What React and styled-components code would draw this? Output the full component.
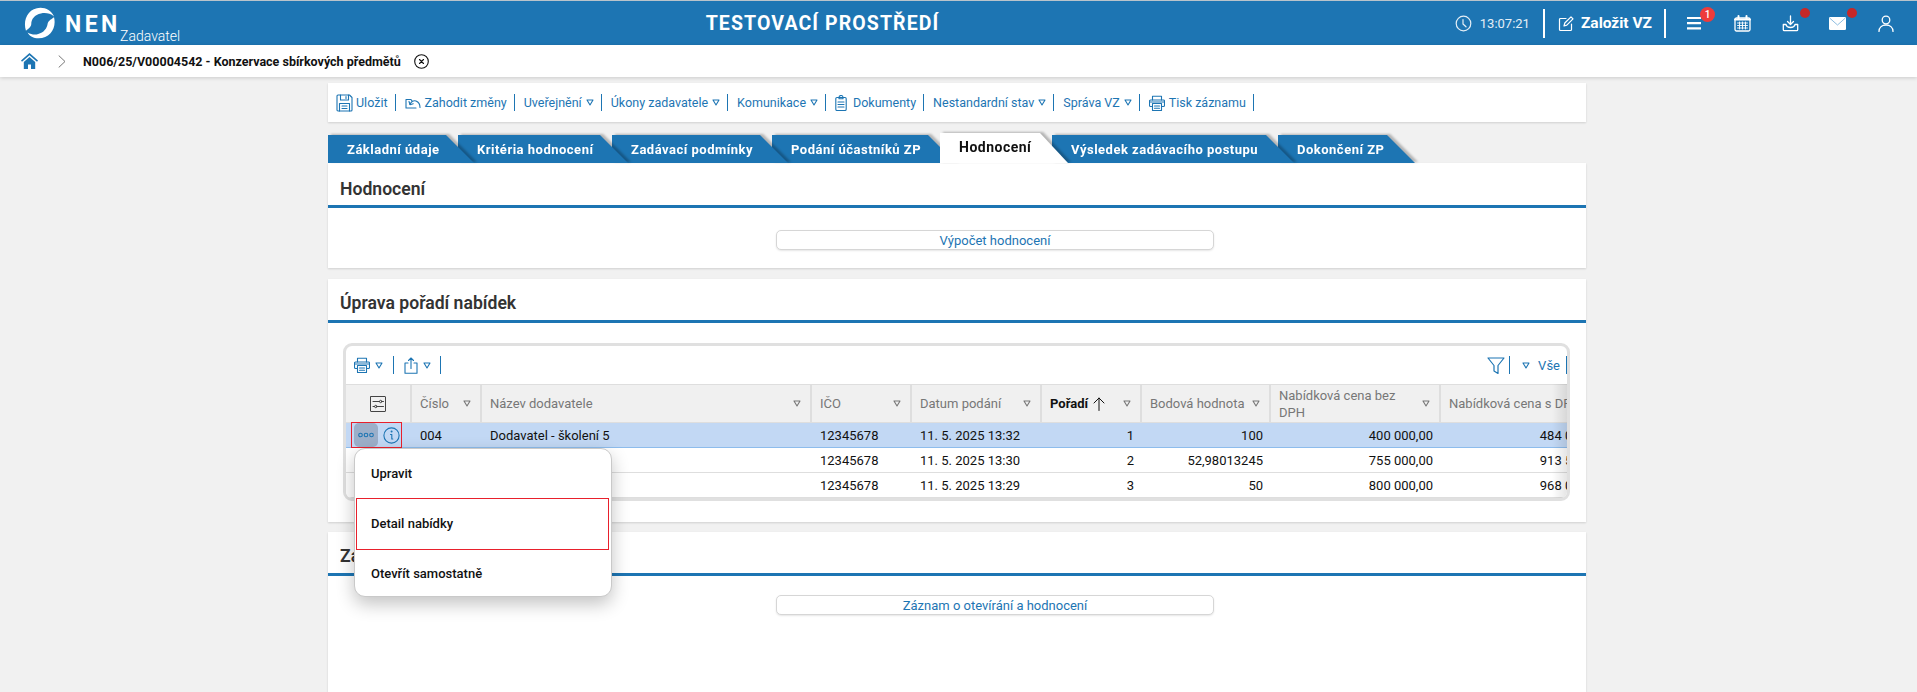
import React from "react";
import styled, { createGlobalStyle } from "styled-components";

const BLUE = "#1d75b3";

const Global = createGlobalStyle`
  html, body { margin: 0; padding: 0; height: 692px; overflow: hidden; background: #f1f1f1; }
  body { font-family: Roboto, "Liberation Sans", sans-serif; font-size: 13px; color: #111; }
  * { box-sizing: border-box; }
`;

const Shell = styled.div`height: 692px; overflow: hidden; display: flex; flex-direction: column;`;

/* ---------- top bar ---------- */
const TopBar = styled.header`
  height: 45px; flex: none; background: ${BLUE}; border-top: 1px solid #b9c3cb;
  display: flex; align-items: center; color: #fff; position: relative;
`;
const Brand = styled.div`width: 705px; flex: none; padding-left: 24px; display: flex; align-items: center; height: 100%;`;
const NenWord = styled.span`font-size: 23px; font-weight: 700; letter-spacing: 3.4px; margin-left: 10px; margin-top: 2px;`;
const Role = styled.span`font-size: 14px; font-weight: 300; align-self: flex-end; margin: 0 0 1px -.5px; line-height: 16px;`;
const EnvTitle = styled.div`width: 235px; flex: none; text-align: center; font-size: 19.5px; font-weight: 700; letter-spacing: 1.1px; white-space: nowrap;`;
const Tools = styled.div`margin-left: auto; display: flex; align-items: center; height: 100%; padding-right: 23px;`;
const Clock = styled.span`font-size: 13px; color: #e4eef6; display: flex; align-items: center; gap: 8px; margin-right: 13px;`;
const ToolDivider = styled.span`width: 2px; height: 29px; background: #fff; flex: none;`;
const NewOrder = styled.span`display: flex; align-items: center; gap: 7px; font-size: 15.5px; font-weight: 700; padding: 0 12px 0 13px; white-space: nowrap;`;
const ToolIcon = styled.span`
  position: relative; display: flex; justify-content: center; align-items: center;
  width: ${p => p.$w}px; margin-left: ${p => p.$ml}px; height: 20px;
`;
const CountBadge = styled.span`
  position: absolute; left: 14px; top: -6px; width: 15px; height: 15px; border-radius: 50%;
  background: #ee3b3b; color: #fff; font-size: 10px; font-weight: 500; line-height: 15px; text-align: center;
`;
const Dot = styled.span`
  position: absolute; left: 18px; top: -5px; width: 10px; height: 10px; border-radius: 50%; background: #c62828;
`;

/* ---------- breadcrumb ---------- */
const Crumbs = styled.nav`
  height: 32px; flex: none; background: #fff; display: flex; align-items: center; padding-left: 21px;
  box-shadow: 0 1px 4px rgba(0,0,0,.16); position: relative; z-index: 3;
`;
const CrumbText = styled.span`font-size: 12.5px; font-weight: 700; color: #111; white-space: nowrap; margin-left: 17px; margin-right: 13px;`;
const CrumbGap = styled.span`display: flex; margin-left: 20px;`;

/* ---------- page column ---------- */
const Page = styled.main`flex: 1; padding: 6px 0 0 328px; min-height: 0;`;
const Column = styled.div`width: 1258px; height: 100%; display: flex; flex-direction: column;`;

const ActionBar = styled.div`
  height: 39px; flex: none; background: #fff; display: flex; align-items: center; padding-left: 8px;
  box-shadow: 0 1px 2px rgba(0,0,0,.14);
`;
const Action = styled.span`
  display: flex; align-items: center; gap: ${p => p.$gap ?? 4}px; color: ${BLUE}; font-size: 12.5px; white-space: nowrap;
  height: 17px; padding-right: 7px; margin-right: 9px; border-right: 1px solid ${BLUE};
`;

const TabRow = styled.div`height: 30px; margin-top: 11px; flex: none; display: flex; align-items: flex-end;`;
const TabWrap = styled.div`
  position: relative; z-index: ${p => p.$z}; margin-right: -16px; width: ${p => p.$w}px;
  filter: drop-shadow(3px -1px 1px rgba(0,0,0,.25));
`;
const TabFace = styled.div`
  height: ${p => (p.$active ? 30 : 28)}px;
  background: ${p => (p.$active ? "#fff" : BLUE)};
  color: ${p => (p.$active ? "#111" : "#fff")};
  clip-path: polygon(0 0, calc(100% - 28px) 0, 100% 100%, 0 100%);
  padding: 0 0 ${p => (p.$active ? 3 : 0)}px 19px;
  font-size: ${p => (p.$active ? 14 : 13)}px; font-weight: 700; letter-spacing: .5px;
  display: flex; align-items: center; white-space: nowrap;
`;

const Section = styled.section`
  background: #fff; flex: none; margin-bottom: ${p => p.$mb ?? 10}px; height: ${p => p.$h ? p.$h + "px" : "auto"};
  box-shadow: 0 1px 2px rgba(0,0,0,.14);
  ${p => p.$grow ? "flex: 1;" : ""}
`;
const SectionTitle = styled.h2`
  margin: 0; height: ${p => p.$h ?? 44}px; border-bottom: 3px solid ${BLUE}; padding: ${p => (p.$h ? 9 : 7)}px 0 0 12px;
  display: flex; align-items: center; font-size: 17.6px; font-weight: 600; color: #333; white-space: nowrap;
`;
const WideButtonRow = styled.div`display: flex; justify-content: center; padding-top: ${p => p.$pt}px; padding-left: 76px;`;
const WideButton = styled.button`
  width: 438px; height: 20px; background: #fff; border: 1px solid #d6d6d6; border-radius: 5px;
  box-shadow: 0 1px 2px rgba(0,0,0,.1); color: ${BLUE}; font: 400 13px Roboto, sans-serif; padding: 0;
`;

/* ---------- table card ---------- */
const Card = styled.div`
  position: relative; margin: 20px 16px 0 15px; height: 158px; border: 3px solid #e0e0e0; border-radius: 9px; background: #fff;
`;
const CardClip = styled.div`overflow: hidden; height: 100%; border-radius: 6px; position: relative;
  &::after { content: ""; position: absolute; top: 38px; right: 0; bottom: 0; width: 15px;
    background: linear-gradient(90deg, rgba(0,0,0,0), rgba(0,0,0,.1)); }
`;
const GridBar = styled.div`height: 38px; display: flex; align-items: center; justify-content: space-between; padding-left: 8px;`;
const BarGroup = styled.div`display: flex; align-items: center;`;
const BarCell = styled.span`
  display: flex; align-items: center; gap: ${p => p.$gap ?? 5}px; height: 18px; padding: 0 ${p => p.$pr ?? 10}px 0 0;
  margin-right: ${p => p.$mr ?? 10}px; border-right: 1px solid ${BLUE}; color: ${BLUE}; font-size: 13px;
`;
const Grid = styled.table`border-collapse: separate; border-spacing: 0; table-layout: fixed; width: 1266px;`;
const Head = styled.th`
  height: 39px; background: #f0f0f0; border-top: 1px solid #dedede; border-right: 2px solid #dedede; border-bottom: 1px solid #dedede;
  font-weight: ${p => (p.$sorted ? 700 : 400)}; color: ${p => (p.$sorted ? "#111" : "#777")}; font-size: 13px; text-align: left; padding: 0 9px 0 8px; line-height: 17px;
`;
const HeadInner = styled.div`display: flex; align-items: center; justify-content: ${p => p.$center ? "center" : "space-between"}; gap: 4px;`;
const Label = styled.span`display: flex; align-items: center; gap: 5px;`;
const Cell = styled.td`
  height: 25px; padding: 0 8px; font-size: 13px; color: #111; white-space: nowrap; overflow: hidden;
  text-align: ${p => (p.$right ? "right" : "left")};
  background: ${p => (p.$selected ? "#c2d8f4" : "#fff")};
  border-bottom: 1px solid ${p => (p.$selected ? "#8dbcec" : "#dedede")};
`;
const ActionCell = styled(Cell)`padding: 0; position: relative; overflow: visible;`;
const RowTools = styled.div`
  position: absolute; left: 5px; top: -1px; width: 51px; height: 26px; border: 1px solid #e8202c; display: flex; align-items: center; padding-left: 2px; gap: 5px;
`;
const DotsButton = styled.span`
  width: 24px; height: 24px; background: #9cafc9; border-radius: 5px; display: flex; align-items: center; justify-content: center;
`;

/* ---------- context menu ---------- */
const Menu = styled.ul`
  position: absolute; left: 8px; top: 102px; z-index: 10; width: 258px; height: 149px; margin: 0; list-style: none; padding: 1px 2px 0 1px;
  background: #fff; border: 1px solid #c9c9c9; border-radius: 11px; box-shadow: 0 7px 18px rgba(0,0,0,.24);
`;
const MenuItem = styled.li`
  height: ${p => (p.$marked ? 52 : 47.5)}px; display: flex; align-items: center; padding-left: ${p => p.$marked ? 14 : 15}px;
  font-size: 13px; font-weight: 500; color: #111; border: ${p => (p.$marked ? "1px solid #e8202c" : "none")};
`;

/* ---------- icons ---------- */
const Svg = ({ w = 16, h = 16, vb, children, stroke = "currentColor", sw = 1.3 }) => (
  <svg width={w} height={h} viewBox={vb || `0 0 ${w} ${h}`} fill="none" stroke={stroke} strokeWidth={sw} strokeLinecap="round" strokeLinejoin="round" style={{ flex: "none", display: "block" }}>
    {children}
  </svg>
);
const Logo = () => (
  <svg width="31" height="32" viewBox="0 0 32 32" fill="#fff" style={{ flex: "none" }}>
    <path d="M2 24C-1.500 13 4 .5 17 .2c6 0 11.500 3.300 14 9-4-3.200-9-4-13.500-3C11 7.500 7.500 12 7.500 17c0 2.800-3 5-5.500 7z" />
    <path d="M31 10c2.800 11-4 21.800-16 21.800-5 0-9.500-2.300-11.300-6 4 2.300 8 2.500 11 1.500 5.600-1.300 9-5.500 9.800-11 .5-2.700 4.500-4.800 6.500-6.300z" />
  </svg>
);
const Tri = ({ c = BLUE }) => (
  <Svg w={8} h={7} stroke={c} sw={1.1}><path d="M1 1h6L4 6z" /></Svg>
);
const ClockIcon = () => <Svg w={17} h={17} sw={1.2}><circle cx="8.500" cy="8.500" r="7.300" /><path d="M8 4.500v4.500l3 2.800" /></Svg>;
const EditIcon = () => <Svg w={16} h={17} sw={1.2}><path d="M8 3.500H2.500a1 1 0 0 0-1 1v10a1 1 0 0 0 1 1h10a1 1 0 0 0 1-1V9" /><path d="M6 11l.8-3L13 1.800 15 3.800 8.800 10.200z" /></Svg>;
const BurgerIcon = () => <Svg w={16} h={14} sw={2.2}><path d="M1 2h14M1 7.200h14M1 12.400h14" strokeLinecap="butt" /></Svg>;
const CalendarIcon = () => (
  <Svg w={17} h={17} sw={1.3}>
    <rect x="1" y="3" width="15" height="13" rx="1.500" /><path d="M4.500 1v3M12.500 1v3" strokeWidth="2" /><path d="M1 4.500h15" strokeWidth="2" />
    <path d="M3.500 8h10M3.500 10.500h10M3.500 13h10M5.500 7v7M8.500 7v7M11.500 7v7" strokeWidth=".9" />
  </Svg>
);
const TrayIcon = () => (
  <Svg w={17} h={17} sw={1.3}>
    <path d="M8.500 1v8M5.500 6.500l3 3 3-3" /><path d="M4 9.500H1.300v5.200a1 1 0 0 0 1 1h12.400a1 1 0 0 0 1-1V9.500H13c-.5 2-2 3-4.500 3s-4-1-4.500-3z" />
  </Svg>
);
const MailIcon = () => (
  <svg width="17" height="13" viewBox="0 0 17 13" style={{ display: "block" }}>
    <rect width="17" height="13" rx="1.200" fill="#fff" /><path d="M.8 1.200 8.500 8l7.700-6.800" fill="none" stroke="#8dbde0" strokeWidth="1" />
  </svg>
);
const UserIcon = () => <Svg w={16} h={17} sw={1.3}><circle cx="8" cy="5" r="3.800" /><path d="M1 16.500c0-4 3-6.500 7-6.500s7 2.500 7 6.500" /></Svg>;
const HomeIcon = () => (
  <svg width="17" height="16" viewBox="0 0 17 16" fill={BLUE} style={{ display: "block" }}>
    <path d="M8.500 0 17 7.500l-1 1.200L8.500 2.200 1 8.700 0 7.500z" /><path d="M2.800 9 8.500 4l5.700 5v7H10v-4.500H7V16H2.800z" />
  </svg>
);
const Chevron = () => <Svg w={8} h={13} stroke="#777" sw={1}><path d="M1 .8 7 6.500 1 12.200" /></Svg>;
const CloseIcon = () => <Svg w={15} h={15} stroke="#111" sw={1.1}><circle cx="7.500" cy="7.500" r="6.800" /><path d="M5.500 5.500l4 4M9.500 5.500l-4 4" /></Svg>;
const SaveIcon = () => (
  <Svg w={17} h={18} sw={1.1}>
    <path d="M2 1h11.500L16 3.500V16a1 1 0 0 1-1 1H2a1 1 0 0 1-1-1V2a1 1 0 0 1 1-1z" /><path d="M4.500 1v5h8V1M10 2.500v2M3.500 17V9.500h10V17M6 12h5M6 14.500h5" />
  </Svg>
);
const DiscardIcon = () => (
  <Svg w={16} h={12} sw={1.1}>
    <path d="M3.500 2.500H1v8.500h10" /><path d="M3.500 2.500h2.500l1 1.500" /><path d="M5 7.500C6 4.500 8.500 3 11 4s4 3.500 4 6.500" /><path d="M4 4.500l1 3.200 3.200-1" />
  </Svg>
);
const ClipIcon = () => (
  <Svg w={12} h={16} sw={1.1}>
    <rect x=".8" y="2.500" width="10.400" height="13" rx="1.200" /><path d="M4 2.500a2 2 0 0 1 4 0v1.200H4zM3 7h6M3 9.500h6M3 12h6" />
  </Svg>
);
const PrinterIcon = ({ w = 16 }) => (
  <Svg w={w} h={w} vb="0 0 16 16" sw={1.1}>
    <path d="M3.500 5V1.200h9V5" /><path d="M3.500 11.500h-2a1 1 0 0 1-1-1V6a1 1 0 0 1 1-1h13a1 1 0 0 1 1 1v4.500a1 1 0 0 1-1 1h-2" />
    <path d="M3.500 8.500h9v7h-9zM5.500 11h5M5.500 13.200h5M1 7h14" />
  </Svg>
);
const ShareIcon = () => <Svg w={14} h={17} sw={1.1}><path d="M4 6H1v10.300h12V6h-3" /><path d="M7 11.500V1M4.500 3.500 7 1l2.500 2.500" /></Svg>;
const FunnelIcon = () => <Svg w={18} h={17} sw={1.2}><path d="M1 1h16l-6 7.500v8l-4-2.500V8.500z" /></Svg>;
const SortUp = () => <Svg w={12} h={14} stroke="#111" sw={1}><path d="M6 13.500V1M1 6l5-5 5 5" /></Svg>;
const TuneIcon = () => (
  <Svg w={16} h={16} stroke="#444" sw={1}>
    <rect x=".5" y=".5" width="15" height="15" rx=".5" /><path d="M3 5.500h6.500M12 5.500h1.500M3 10.500h1.500M7 10.500h6.500" /><circle cx="10.700" cy="5.500" r="1.200" /><circle cx="5.800" cy="10.500" r="1.200" />
  </Svg>
);
const Dots = () => (
  <Svg w={16} h={6} stroke={BLUE} sw={1.1}><circle cx="2.500" cy="3" r="1.800" /><circle cx="8" cy="3" r="1.800" /><circle cx="13.500" cy="3" r="1.800" /></Svg>
);
const InfoIcon = () => (
  <Svg w={17} h={17} stroke={BLUE} sw={1.1}><circle cx="8.500" cy="8.500" r="7.600" /><path d="M7.500 7.500h1.300v4.500h1" /><path d="M8.500 4.500h.2" strokeWidth="1.800" /></Svg>
);

/* ---------- data ---------- */
const actions = [
  { icon: <SaveIcon />, text: "Uložit", gap: 3 },
  { icon: <DiscardIcon />, text: "Zahodit změny" },
  { text: "Uveřejnění", tri: true },
  { text: "Úkony zadavatele", tri: true },
  { text: "Komunikace", tri: true },
  { icon: <ClipIcon />, text: "Dokumenty", gap: 6 },
  { text: "Nestandardní stav", tri: true },
  { text: "Správa VZ", tri: true },
  { icon: <PrinterIcon />, text: "Tisk záznamu" },
];
const tabs = [
  ["Základní údaje", 146], ["Kritéria hodnocení", 170], ["Zadávací podmínky", 176], ["Podání účastníků ZP", 184],
  ["Hodnocení", 128, true], ["Výsledek zadávacího postupu", 242], ["Dokončení ZP", 137],
];
const columns = [
  { w: 66 }, { w: 70, t: "Číslo" }, { w: 330, t: "Název dodavatele" }, { w: 100, t: "IČO" }, { w: 130, t: "Datum podání" },
  { w: 100, t: "Pořadí", sorted: true }, { w: 129, t: "Bodová hodnota" }, { w: 170, t: "Nabídková cena bez DPH" }, { w: 171, t: "Nabídková cena s DPH" },
];
const rows = [
  ["004", "Dodavatel - školení 5", "12345678", "11. 5. 2025 13:32", "1", "100", "400 000,00", "484 000,00"],
  ["", "", "12345678", "11. 5. 2025 13:30", "2", "52,98013245", "755 000,00", "913 550,00"],
  ["", "", "12345678", "11. 5. 2025 13:29", "3", "50", "800 000,00", "968 000,00"],
];

export default function App() {
  return (
    <Shell>
      <Global />
      <TopBar>
        <Brand>
          <Logo />
          <NenWord>NEN</NenWord>
          <Role>Zadavatel</Role>
        </Brand>
        <EnvTitle>TESTOVACÍ PROSTŘEDÍ</EnvTitle>
        <Tools>
          <Clock><ClockIcon />13:07:21</Clock>
          <ToolDivider />
          <NewOrder><EditIcon />Založit VZ</NewOrder>
          <ToolDivider />
          <ToolIcon $w={16} $ml={20}><BurgerIcon /><CountBadge>1</CountBadge></ToolIcon>
          <ToolIcon $w={17} $ml={32}><CalendarIcon /></ToolIcon>
          <ToolIcon $w={17} $ml={31}><TrayIcon /><Dot /></ToolIcon>
          <ToolIcon $w={17} $ml={30}><MailIcon /><Dot /></ToolIcon>
          <ToolIcon $w={16} $ml={32}><UserIcon /></ToolIcon>
        </Tools>
      </TopBar>

      <Crumbs>
        <HomeIcon />
        <CrumbGap><Chevron /></CrumbGap>
        <CrumbText>N006/25/V00004542 - Konzervace sbírkových předmětů</CrumbText>
        <CloseIcon />
      </Crumbs>

      <Page>
        <Column>
          <ActionBar>
            {actions.map(a => (
              <Action key={a.text} $gap={a.gap}>
                {a.icon}{a.text}{a.tri && <Tri />}
              </Action>
            ))}
          </ActionBar>

          <TabRow>
            {tabs.map(([t, w, active], i) => (
              <TabWrap key={t} $w={w} $z={active ? 20 : 10 - i}>
                <TabFace $active={active}>{t}</TabFace>
              </TabWrap>
            ))}
          </TabRow>

          <Section $h={105} $mb={11}>
            <SectionTitle $h={45}>Hodnocení</SectionTitle>
            <WideButtonRow $pt={22}><WideButton>Výpočet hodnocení</WideButton></WideButtonRow>
          </Section>

          <Section $h={243}>
            <SectionTitle>Úprava pořadí nabídek</SectionTitle>
            <Card>
              <CardClip>
                <GridBar>
                  <BarGroup>
                    <BarCell><PrinterIcon /><Tri /></BarCell>
                    <BarCell $pr={9}><ShareIcon /><Tri /></BarCell>
                  </BarGroup>
                  <BarGroup>
                    <BarCell $pr={4} $mr={12}><FunnelIcon /></BarCell>
                    <BarCell $gap={8} $pr={6} $mr={0}><Tri />Vše</BarCell>
                  </BarGroup>
                </GridBar>
                <Grid>
                  <colgroup>{columns.map((c, i) => <col key={i} style={{ width: c.w }} />)}</colgroup>
                  <thead>
                    <tr>
                      {columns.map((c, i) => (
                        <Head key={i} $sorted={c.sorted}>
                          {i === 0 ? (
                            <HeadInner $center><TuneIcon /></HeadInner>
                          ) : (
                            <HeadInner>
                              <Label>{c.t}{c.sorted && <SortUp />}</Label>
                              <Tri c="#777" />
                            </HeadInner>
                          )}
                        </Head>
                      ))}
                    </tr>
                  </thead>
                  <tbody>
                    {rows.map((r, ri) => (
                      <tr key={ri}>
                        <ActionCell $selected={ri === 0}>
                          {ri === 0 && (
                            <RowTools><DotsButton><Dots /></DotsButton><InfoIcon /></RowTools>
                          )}
                        </ActionCell>
                        {r.map((v, ci) => (
                          <Cell key={ci} $selected={ri === 0} $right={ci >= 4}>{v}</Cell>
                        ))}
                      </tr>
                    ))}
                  </tbody>
                </Grid>
              </CardClip>
              <Menu>
                <MenuItem>Upravit</MenuItem>
                <MenuItem $marked>Detail nabídky</MenuItem>
                <MenuItem>Otevřít samostatně</MenuItem>
              </Menu>
            </Card>
          </Section>

          <Section $grow $mb={0}>
            <SectionTitle>Záznam o otevírání a hodnocení</SectionTitle>
            <WideButtonRow $pt={19}><WideButton>Záznam o otevírání a hodnocení</WideButton></WideButtonRow>
          </Section>
        </Column>
      </Page>
    </Shell>
  );
}
